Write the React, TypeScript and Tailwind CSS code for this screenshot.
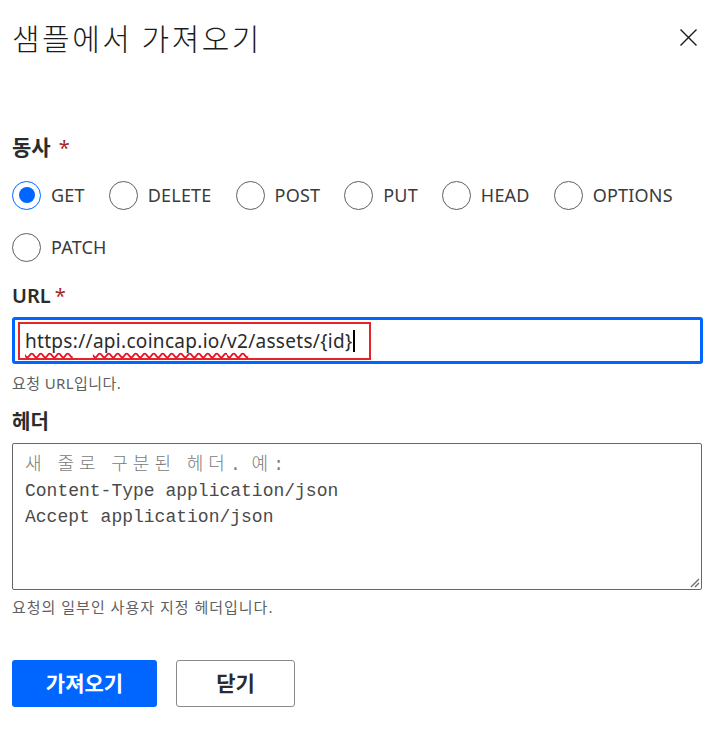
import React from "react";

const methods = ["GET", "DELETE", "POST", "PUT", "HEAD", "OPTIONS", "PATCH"];

function Radio({ label, checked }: { label: string; checked?: boolean }) {
  return (
    <label className="flex items-center h-[30px] gap-[10px] cursor-pointer">
      <span
        className={
          checked
            ? "w-[29px] h-[29px] rounded-full border border-[#0066ff] flex items-center justify-center"
            : "w-[29px] h-[29px] rounded-full border-[1.5px] border-[#5f5f5f]"
        }
      >
        {checked && <span className="w-[16px] h-[16px] rounded-full bg-[#0066ff]" />}
      </span>
      <span className="text-[18px] text-[#3b3b3b] leading-[30px] tracking-[0.2px]">{label}</span>
    </label>
  );
}

function FieldLabel({ children, required, gap }: { children: React.ReactNode; required?: boolean; gap?: string }) {
  return (
    <div className="text-[20px] leading-[28px] font-semibold text-[#2b2b2b]">
      {children}
      {required && <span className={"text-[#a4262c] font-normal " + (gap ?? "ml-[6px]")}>*</span>}
    </div>
  );
}

export default function App() {
  return (
    <div className="w-[719px] h-[739px] bg-white px-3 font-['Noto_Sans','Noto_Sans_CJK_KR',sans-serif] text-[#2b2b2b]">
      <div className="flex items-center justify-between pt-[17px] h-[57px]">
        <h1 className="text-[30px] leading-[40px] font-light tracking-[2.5px] text-[#1b1b1b] font-['Noto_Sans_CJK_KR',sans-serif]">
          샘플에서 가져오기
        </h1>
        <svg width="19" height="19" viewBox="0 0 19 19" className="mr-[9px]">
          <path d="M1.5 1.5 L17.5 17.5 M17.5 1.5 L1.5 17.5" stroke="#1b1b1b" strokeWidth="1.4" />
        </svg>
      </div>

      <div className="mt-[76px]">
        <FieldLabel required gap="ml-[8px]">
          <span className="text-[21px]">동사</span>
        </FieldLabel>
      </div>
      <div className="mt-[18px] flex flex-wrap gap-x-[24px] gap-y-[22px] w-[691px]">
        {methods.map((m) => (
          <Radio key={m} label={m} checked={m === "GET"} />
        ))}
      </div>

      <div className="mt-[20px]">
        <FieldLabel required gap="ml-[4px]">URL</FieldLabel>
      </div>
      <div className="mt-[7px] h-[47px] w-[691px] border-[3px] border-[#0066ff] rounded-[3px] flex items-center pl-[3px]">
        <span className="h-[38px] border-2 border-[#e3242b] flex items-center pl-[5px] pr-[14px]">
          <span className="text-[19px] tracking-[0.3px] text-[#2b2b2b] leading-[24px] decoration-wavy decoration-[#e81123] decoration-1 underline-offset-[5px]">
            <span className="underline decoration-wavy decoration-[#e81123]">https</span>
            ://
            <span className="underline decoration-wavy decoration-[#e81123]">api.coincap.io/</span>
            <span className="underline decoration-wavy decoration-[#e81123]">v2</span>
            /assets/&#123;id&#125;
          </span>
          <span className="w-[2px] h-[22px] bg-black ml-[1px]" />
        </span>
      </div>
      <div className="mt-[9px] text-[15px] tracking-[0.4px] leading-[20px] text-[#5f5f5f]">요청 URL입니다.</div>

      <div className="mt-[15px]">
        <FieldLabel>헤더</FieldLabel>
      </div>
      <div className="relative mt-[7px] h-[147px] w-[690px] border border-[#666666] rounded-[2px] px-3 pt-[8px] font-['Liberation_Mono','Noto_Sans_CJK_KR',monospace] text-[18px] leading-[26px]">
        <div className="text-[#7a7a7a]">
          <span className="tracking-[5px] font-light">새</span> <span className="tracking-[5px] font-light">줄로</span>{" "}
          <span className="tracking-[5px] font-light">구분된</span> <span className="tracking-[5px] font-light">헤더</span>.{" "}
          <span className="tracking-[5px] font-light">예</span>:
        </div>
        <div className="text-[#4a4a4a]">Content-Type application/json</div>
        <div className="text-[#4a4a4a]">Accept application/json</div>
        <svg width="11" height="11" viewBox="0 0 11 11" className="absolute right-[1px] bottom-[1px]">
          <path d="M10 2 L2 10 M10 6 L6 10" stroke="#6b6b6b" strokeWidth="1.3" />
        </svg>
      </div>
      <div className="mt-[7px] text-[15px] tracking-[1px] leading-[20px] text-[#5f5f5f]">
        요청의 일부인 사용자 지정 헤더입니다.
      </div>

      <div className="mt-[43px] flex gap-[19px]">
        <button className="w-[145px] h-[47px] rounded-[3px] bg-[#0066ff] text-white text-[21px] font-bold">
          가져오기
        </button>
        <button className="w-[119px] h-[47px] rounded-[3px] border border-[#8a8a8a] bg-white text-[#2b2b2b] text-[21px] font-bold">
          닫기
        </button>
      </div>
    </div>
  );
}
